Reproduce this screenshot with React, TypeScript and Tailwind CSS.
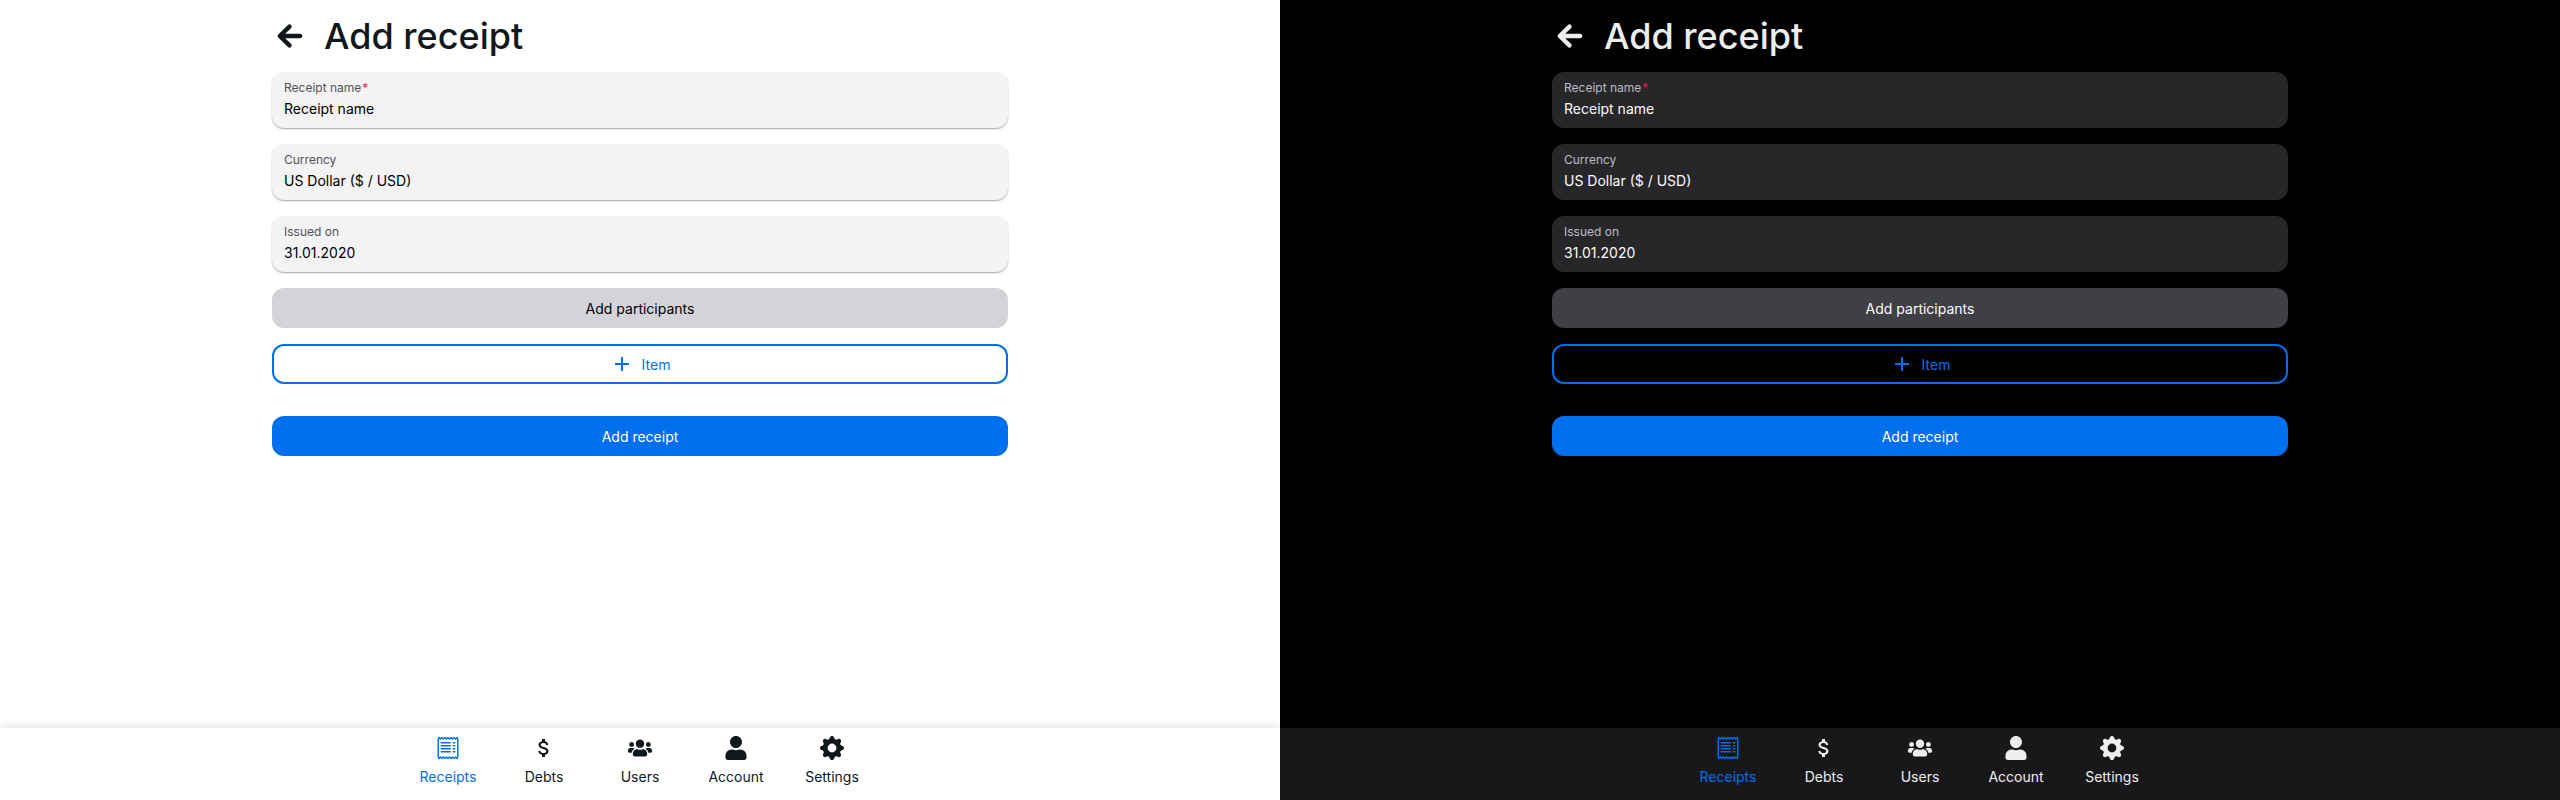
import { BsFillGearFill, BsReceipt } from "react-icons/bs";
import { FaUser, FaUsers } from "react-icons/fa";
import { IoMdArrowRoundBack } from "react-icons/io";
import { MdAdd, MdAttachMoney } from "react-icons/md";

const TABS = [
  { label: "Receipts", Icon: BsReceipt },
  { label: "Debts", Icon: MdAttachMoney },
  { label: "Users", Icon: FaUsers },
  { label: "Account", Icon: FaUser },
  { label: "Settings", Icon: BsFillGearFill },
];

type Themed = { dark?: boolean };

function Field({ label, value, required, dark }: Themed & { label: string; value: string; required?: boolean }) {
  return (
    <div
      className={`flex h-14 flex-col rounded-xl px-3 pt-2 ${
        dark ? "bg-[#27272a]" : "bg-[#f3f3f4] shadow-[0_1px_1.5px_rgba(0,0,0,0.35)]"
      }`}
    >
      <span className={`text-xs leading-4 ${dark ? "text-[#bcbcc2]" : "text-[#52525b]"}`}>
        {label}
        {required && <span className="ml-px text-[#f31260]">*</span>}
      </span>
      <span className={`mt-[3px] text-sm leading-5 ${dark ? "text-[#fafafa]" : "text-black"}`}>{value}</span>
    </div>
  );
}

function Screen({ dark }: Themed) {
  return (
    <div
      className={`flex h-[800px] w-[1280px] flex-col overflow-hidden ${
        dark ? "bg-black text-[#ecedee]" : "bg-white text-[#11181c]"
      }`}
    >
      <main className="mx-auto flex w-[736px] flex-1 flex-col gap-4">
        <header className="flex h-14 items-center gap-4 pt-4">
          <IoMdArrowRoundBack size={36} />
          <h1 className="text-4xl font-medium">Add receipt</h1>
        </header>
        <Field dark={dark} label="Receipt name" value="Receipt name" required />
        <Field dark={dark} label="Currency" value="US Dollar ($ / USD)" />
        <Field dark={dark} label="Issued on" value="31.01.2020" />
        <button
          className={`h-10 rounded-xl pt-0.5 text-sm ${dark ? "bg-[#3f3f46] text-[#fafafa]" : "bg-[#d4d4d8] text-black"}`}
        >
          Add participants
        </button>
        <button className="flex h-10 items-center justify-center gap-2 rounded-xl border-2 border-[#006fee] text-sm text-[#006fee]">
          <MdAdd size={24} />
          <span className="pt-0.5">Item</span>
        </button>
        <button className="mt-4 h-10 rounded-xl bg-[#006fee] pt-0.5 text-sm text-white">Add receipt</button>
      </main>
      <nav
        className={`flex h-[72px] justify-center ${
          dark ? "bg-[#18181b]" : "bg-white shadow-[0_0_10px_rgba(0,0,0,0.16)]"
        }`}
      >
        {TABS.map(({ label, Icon }) => (
          <a
            key={label}
            className={`flex w-24 flex-col items-center pt-2 ${label === "Receipts" ? "text-[#006fee]" : ""}`}
          >
            <Icon size={24} />
            <span className="mt-[7px] text-sm">{label}</span>
          </a>
        ))}
      </nav>
    </div>
  );
}

export default function App() {
  return (
    <div className="flex w-[2560px] font-[Inter,sans-serif]">
      <Screen />
      <Screen dark />
    </div>
  );
}
